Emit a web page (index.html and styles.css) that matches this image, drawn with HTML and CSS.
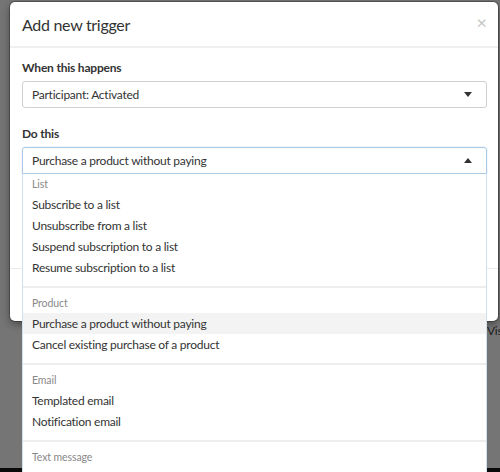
FILE: index.html
```html
<!DOCTYPE html>
<html>
<head>
<meta charset="utf-8">
<link rel="stylesheet" href="styles.css">
</head>
<body>
<div class="backdrop">
  <span class="page-btn">Vis</span>
  <div class="page-bottom"></div>
</div>
<div class="modal">
  <div class="modal-header">
    <h1 class="modal-title">Add new trigger</h1>
    <span class="close">×</span>
  </div>
  <div class="modal-body">
    <div class="field">
      <div class="label">When this happens</div>
      <div class="select">
        <span>Participant: Activated</span>
        <span class="caret down"></span>
      </div>
    </div>
    <div class="field">
      <div class="label">Do this</div>
      <div class="select-wrap">
        <div class="select open">
          <span>Purchase a product without paying</span>
          <span class="caret up"></span>
        </div>
        <div class="menu">
          <div class="group first">
            <div class="group-title">List</div>
            <div class="item">Subscribe to a list</div>
            <div class="item">Unsubscribe from a list</div>
            <div class="item">Suspend subscription to a list</div>
            <div class="item">Resume subscription to a list</div>
          </div>
          <div class="group">
            <div class="group-title">Product</div>
            <div class="item active">Purchase a product without paying</div>
            <div class="item">Cancel existing purchase of a product</div>
          </div>
          <div class="group">
            <div class="group-title">Email</div>
            <div class="item">Templated email</div>
            <div class="item">Notification email</div>
          </div>
          <div class="group last">
            <div class="group-title">Text message</div>
          </div>
        </div>
      </div>
    </div>
  </div>
  <div class="modal-footer"></div>
</div>
</body>
</html>
```
FILE: styles.css
```css
html, body {
  margin: 0;
  padding: 0;
}
body {
  width: 500px;
  height: 472px;
  overflow: hidden;
  position: relative;
  background: #757575;
  font-family: Lato, "Liberation Sans", Arial, sans-serif;
  color: #333;
}
.backdrop {
  position: absolute;
  inset: 0;
}
.page-btn {
  position: absolute;
  left: 487px;
  top: 323px;
  font-size: 12px;
  letter-spacing: -0.3px;
  color: #1e1e1e;
  white-space: nowrap;
}
.page-bottom {
  position: absolute;
  left: 0;
  right: 0;
  bottom: 0;
  height: 4px;
  background: #0a0a0a;
}
.modal {
  position: absolute;
  left: 10px;
  top: 2px;
  width: 488px;
  height: 319px;
  background: #fff;
  border-radius: 5px;
  box-shadow: 0 0 0 1px rgba(0,0,0,0.25), 0 3px 9px rgba(0,0,0,0.4);
  display: flex;
  flex-direction: column;
}
.modal-header {
  height: 44px;
  border-bottom: 2px solid #f0f0f0;
  display: flex;
  align-items: center;
  justify-content: space-between;
  padding: 0 12px 0 12px;
}
.modal-title {
  margin: 0;
  font-size: 16px;
  letter-spacing: -0.3px;
  font-weight: normal;
  color: #333;
  padding-top: 1px;
}
.close {
  font-size: 18px;
  color: #c4c4c4;
  line-height: 1;
  margin-top: -4px;
  margin-right: -1px;
}
.modal-body {
  padding: 12px 11px 0 12px;
  flex: 1;
}
.field {
  margin-bottom: 18px;
}
.label {
  font-size: 12px;
  letter-spacing: -0.2px;
  font-weight: bold;
  color: #333;
  line-height: 16px;
  margin-bottom: 5px;
}
.select {
  height: 25px;
  border: 1px solid #d0d0d0;
  border-radius: 3px;
  display: flex;
  align-items: center;
  justify-content: space-between;
  padding: 0 14px 0 9px;
  font-size: 12px;
  letter-spacing: -0.25px;
  color: #333;
}
.select.open {
  border-color: #a9cbe8;
  border-bottom-left-radius: 0;
  border-bottom-right-radius: 0;
  box-shadow: 0 0 2px rgba(120,170,215,0.35);
}
.select-wrap {
  position: relative;
}
.caret {
  width: 0;
  height: 0;
  border-left: 4px solid transparent;
  border-right: 4px solid transparent;
}
.caret.down {
  border-top: 5px solid #333;
}
.caret.up {
  border-bottom: 5px solid #333;
}
.menu {
  position: absolute;
  left: 0;
  right: 0;
  top: 100%;
  background: #fff;
  border-left: 1px solid #cfe0ef;
  border-right: 1px solid #cfe0ef;
  font-size: 12px;
  letter-spacing: -0.25px;
  z-index: 5;
}
.group {
  padding: 5px 0 8px;
  border-bottom: 2px solid #eeeeee;
}
.group.first {
  padding-top: 0;
}
.group.last {
  border-bottom: 0;
  padding-bottom: 20px;
}
.group-title {
  height: 20px;
  line-height: 20px;
  padding-left: 9px;
  font-size: 10.5px;
  letter-spacing: -0.1px;
  color: #888;
}
.item {
  height: 21px;
  line-height: 21px;
  padding-left: 9px;
  color: #333;
}
.item.active {
  background: #f3f3f3;
}
.modal-footer {
  height: 52px;
  border-top: 1px solid #eaeaea;
}
```
